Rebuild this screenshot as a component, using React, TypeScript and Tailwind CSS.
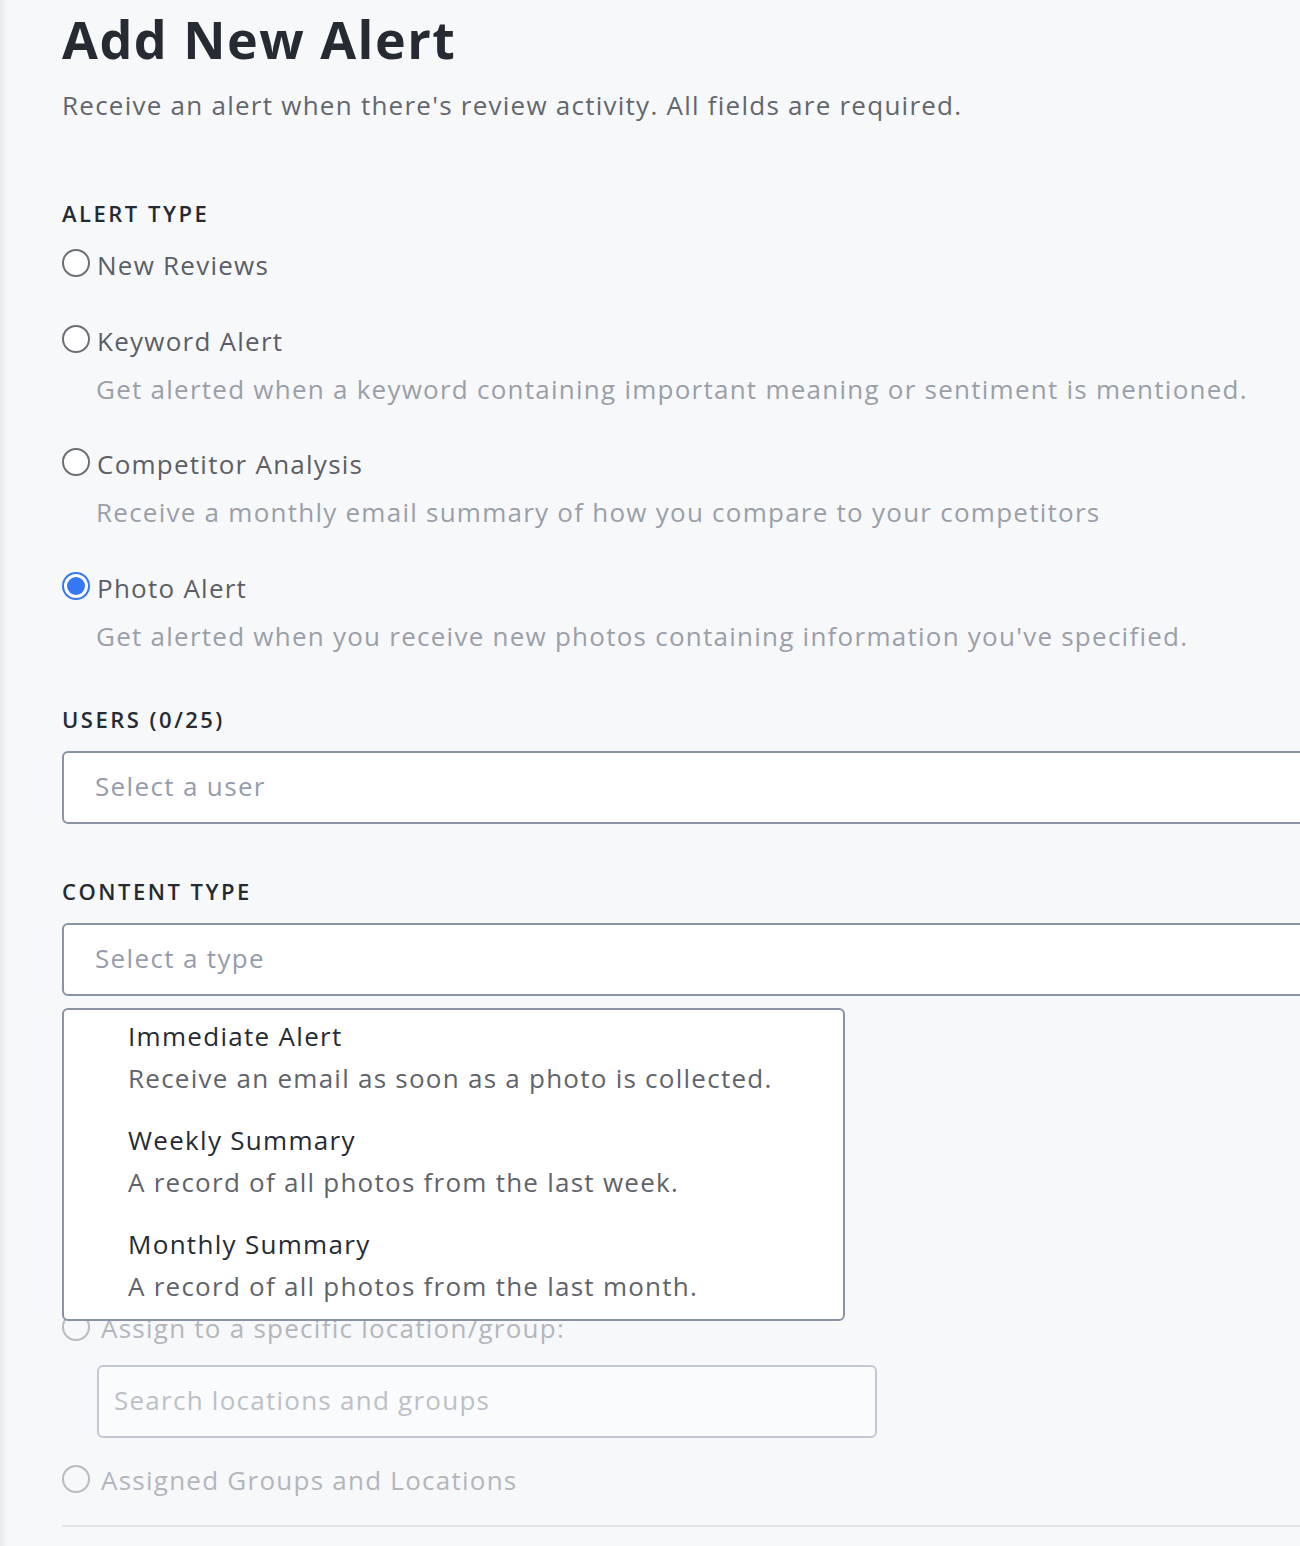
import React from "react";

const font = { fontFamily: "'Open Sans', 'Noto Sans', sans-serif" };

function Radio({ checked = false, disabled = false }: { checked?: boolean; disabled?: boolean }) {
  if (checked) {
    return (
      <span className="flex h-[28px] w-[28px] shrink-0 items-center justify-center rounded-full border-2 border-[#3478f6] bg-white">
        <span className="h-[18px] w-[18px] rounded-full bg-[#3478f6]" />
      </span>
    );
  }
  return (
    <span
      className={
        disabled
          ? "block h-[28px] w-[28px] shrink-0 rounded-full border-2 border-[#b9bcc2] bg-transparent"
          : "block h-[28px] w-[28px] shrink-0 rounded-full border-2 border-[#6c6f75] bg-white"
      }
    />
  );
}

function Option({ label, desc, checked }: { label: string; desc?: string; checked?: boolean }) {
  return (
    <div>
      <div className="flex h-[36px] items-center gap-[7px]">
        <span className="-mt-[5px]">
          <Radio checked={checked} />
        </span>
        <span className="text-[26px] leading-[36px] tracking-[1.25px] text-[#5b5e65]">{label}</span>
      </div>
      {desc && (
        <div className="mt-[12px] pl-[34px] text-[26px] leading-[36px] tracking-[1.25px] text-[#9a9fa8]">{desc}</div>
      )}
    </div>
  );
}

function Label({ children }: { children: React.ReactNode }) {
  return <div className="text-[22px] font-semibold leading-[30px] tracking-[2.5px] text-[#262b33]">{children}</div>;
}

function Select({ placeholder }: { placeholder: string }) {
  return (
    <div className="flex h-[73px] w-[1400px] items-center rounded-[6px] border-2 border-[#8a93a6] bg-white pb-[3px] pl-[31px] text-[26px] tracking-[1.35px] text-[#959cab]">
      {placeholder}
    </div>
  );
}

function MenuItem({ title, desc }: { title: string; desc: string }) {
  return (
    <div>
      <div className="text-[26px] font-medium leading-[36px] tracking-[1.3px] text-[#262b33]">{title}</div>
      <div className="mt-[6px] text-[26px] leading-[36px] tracking-[1.25px] text-[#5f636b]">{desc}</div>
    </div>
  );
}

export default function App() {
  return (
    <div className="relative min-h-[1546px] w-full overflow-hidden bg-[#f7f8fa]" style={font}>
      <div className="pointer-events-none absolute left-0 top-0 h-full w-[8px] bg-gradient-to-r from-[#e6e8ec] to-[#f7f8fa]" />
      <div className="pl-[62px] pt-[9px]">
        <h1 className="text-[52px] font-bold leading-[60px] tracking-[1.5px] text-[#262b33]">Add New Alert</h1>
        <p className="mt-[18px] text-[26px] leading-[36px] tracking-[1.25px] text-[#63666d]">
          Receive an alert when there's review activity. All fields are required.
        </p>

        <div className="mt-[75px]">
          <Label>ALERT TYPE</Label>
        </div>
        <div className="mt-[19px] flex flex-col">
          <Option label="New Reviews" />
          <div className="mt-[40px]">
            <Option label="Keyword Alert" desc="Get alerted when a keyword containing important meaning or sentiment is mentioned." />
          </div>
          <div className="mt-[39px]">
            <Option label="Competitor Analysis" desc="Receive a monthly email summary of how you compare to your competitors" />
          </div>
          <div className="mt-[40px]">
            <Option checked label="Photo Alert" desc="Get alerted when you receive new photos containing information you've specified." />
          </div>
        </div>

        <div className="mt-[50px]">
          <Label>USERS (0/25)</Label>
        </div>
        <div className="mt-[17px]">
          <Select placeholder="Select a user" />
        </div>

        <div className="mt-[52px]">
          <Label>CONTENT TYPE</Label>
        </div>
        <div className="relative mt-[17px]">
          <Select placeholder="Select a type" />
          <div className="absolute left-0 top-[85px] z-10 flex h-[313px] w-[783px] flex-col gap-[26px] rounded-[6px] border-2 border-[#8a93a6] bg-white pl-[64px] pt-[8px]">
            <MenuItem title="Immediate Alert" desc="Receive an email as soon as a photo is collected." />
            <MenuItem title="Weekly Summary" desc="A record of all photos from the last week." />
            <MenuItem title="Monthly Summary" desc="A record of all photos from the last month." />
          </div>
        </div>

        <div className="mt-[314px] flex h-[36px] items-center gap-[11px]">
          <span className="-mt-[2px]">
            <Radio disabled />
          </span>
          <span className="text-[26px] leading-[36px] tracking-[1.25px] text-[#b3b6bc]">Assign to a specific location/group:</span>
        </div>
        <div className="ml-[35px] mt-[19px] flex h-[73px] w-[780px] items-center rounded-[6px] border-2 border-[#c2c8d3] bg-[#fafbfc] pb-[3px] pl-[15px] text-[26px] tracking-[1.25px] text-[#bcc0c7]">
          Search locations and groups
        </div>
        <div className="mt-[24px] flex h-[36px] items-center gap-[11px]">
          <span className="-mt-[2px]">
            <Radio disabled />
          </span>
          <span className="text-[26px] leading-[36px] tracking-[1.25px] text-[#b3b6bc]">Assigned Groups and Locations</span>
        </div>
        <div className="mt-[27px] h-[2px] w-[1400px] bg-[#e1e3e8]" />
      </div>
    </div>
  );
}
